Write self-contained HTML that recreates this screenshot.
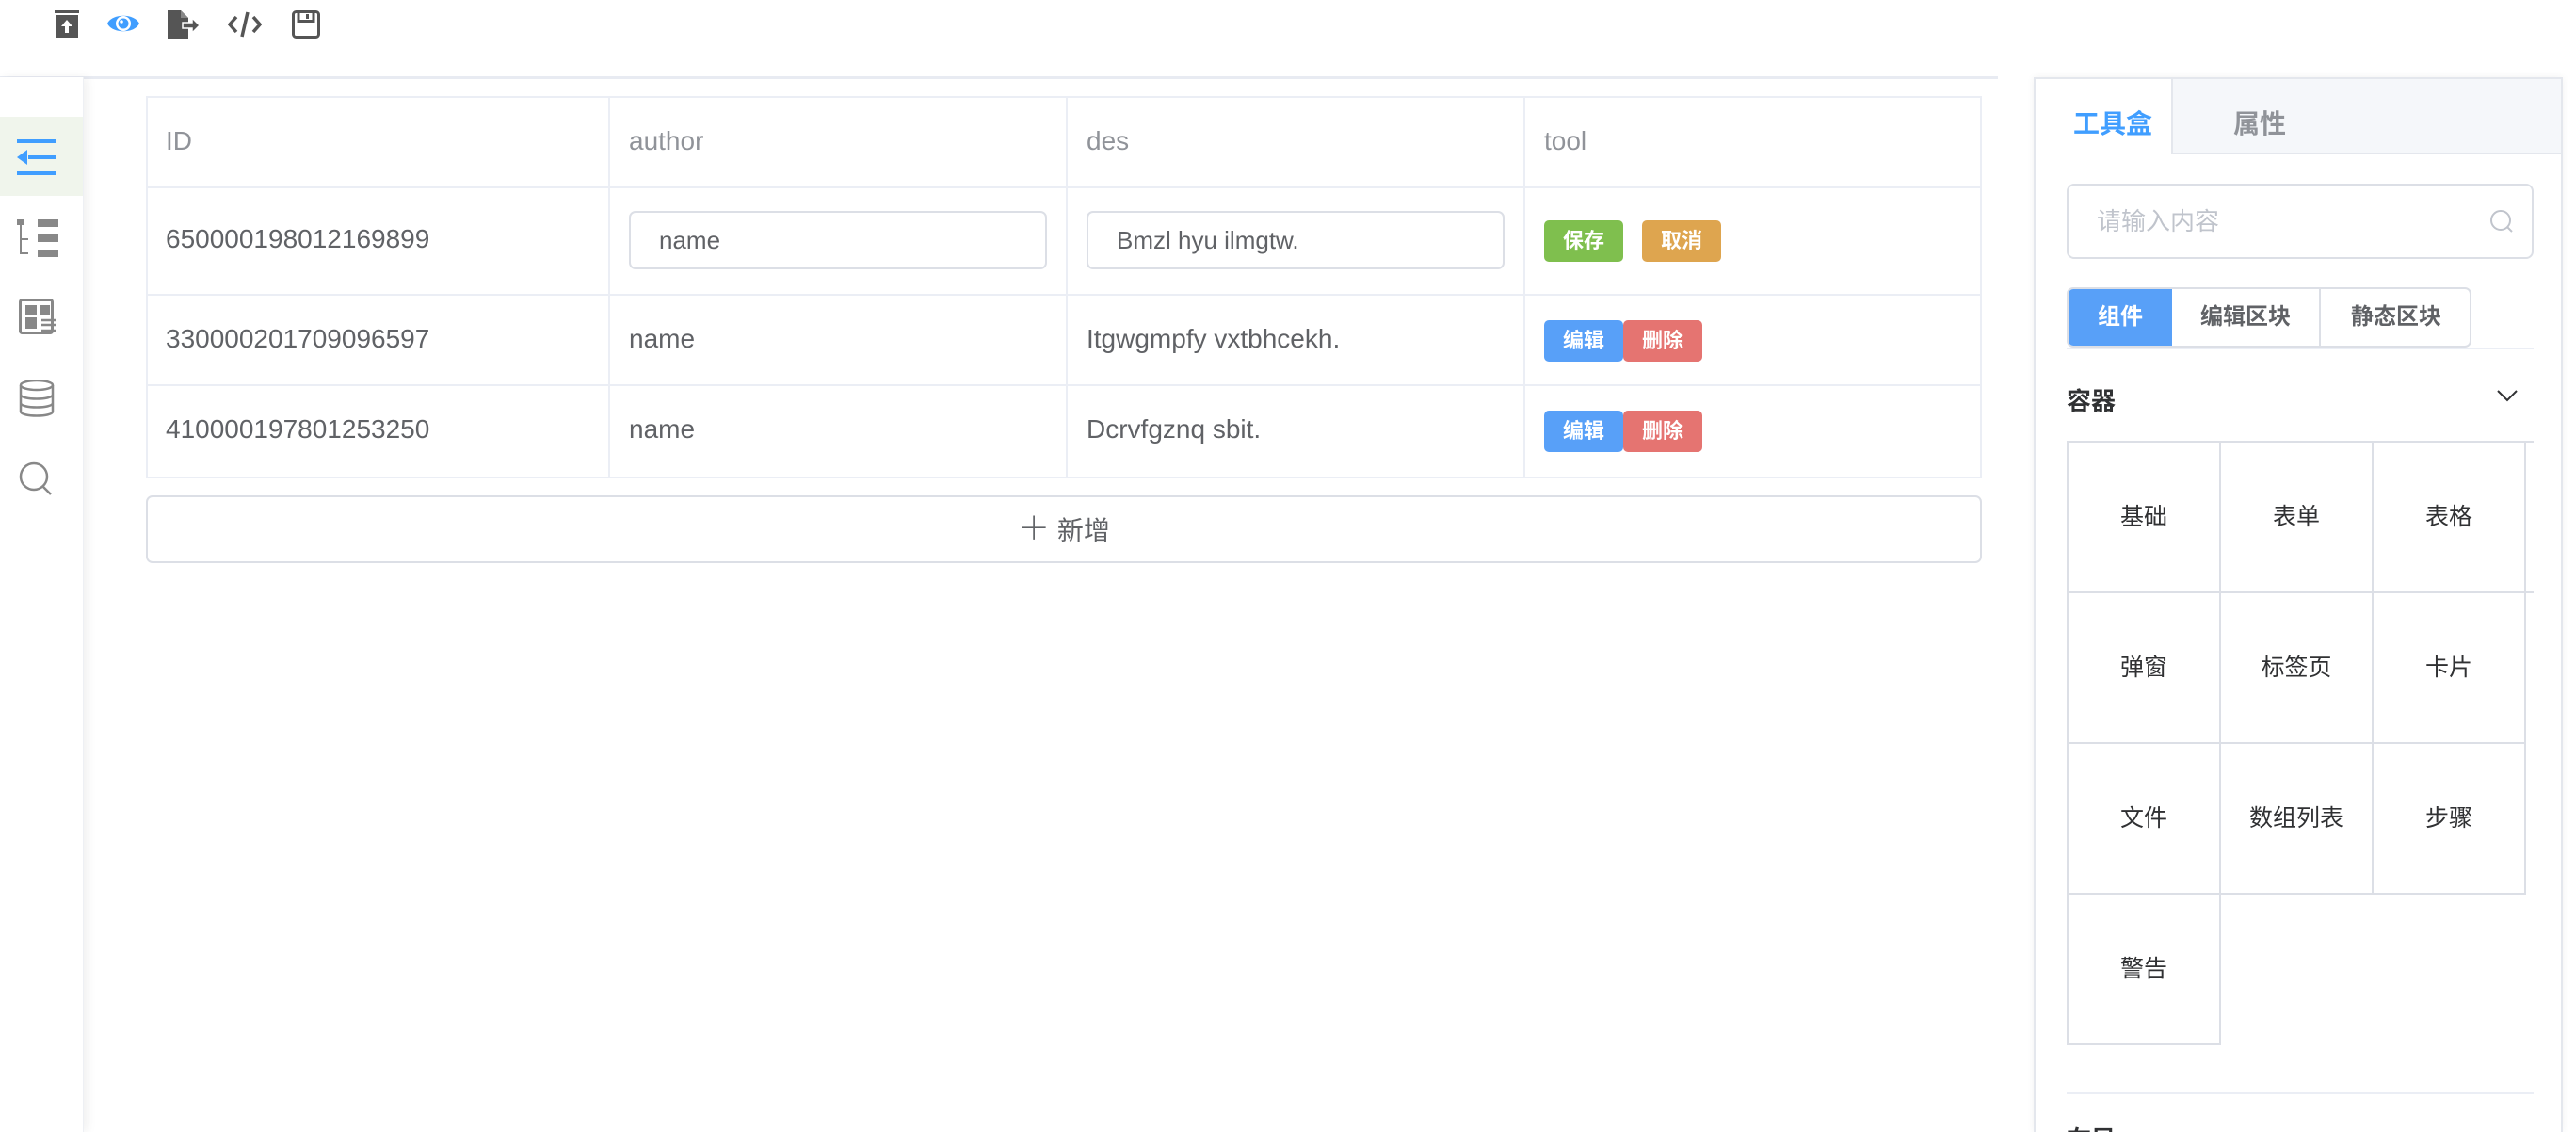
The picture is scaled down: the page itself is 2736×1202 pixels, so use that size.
<!DOCTYPE html>
<html style="width:2736px;height:1202px;overflow:hidden"><head><meta charset="utf-8"><style>
*{box-sizing:border-box;margin:0;padding:0}
body{width:2736px;height:1202px;overflow:hidden;background:#fff;font-family:"Liberation Sans","Noto Sans CJK SC",sans-serif;position:relative;color:#606266}
.a{position:absolute}
.tb svg{position:absolute;top:11px}
.side{left:0;top:82px;width:89px;height:1120px;background:#fff;box-shadow:4px 0 10px rgba(0,0,0,.06);border-right:1px solid #eef0f4}
.vl{position:absolute;width:2px;background:#ebeef5}
.hl{position:absolute;height:2px;background:#ebeef5}
.th{position:absolute;font-size:28px;color:#909399;line-height:28px;font-weight:500}
.td{position:absolute;font-size:28px;color:#606266;line-height:28px}
.inp{position:absolute;border:2px solid #dcdfe6;border-radius:7px;height:62px;font-size:26px;color:#606266;line-height:58px;padding-left:30px}
.btn{position:absolute;height:44px;width:84px;color:#fff;font-size:22px;font-weight:bold;text-align:center;line-height:44px;border-radius:5px}
.cell{position:absolute;width:164px;height:162px;border:2px solid #dcdfe6;font-size:25px;color:#303133;text-align:center;line-height:158px}
</style></head><body>
<div class="a tb" style="left:0;top:0;width:2736px;height:82px">
<svg style="left:58px" width="26" height="30" viewBox="0 0 26 30"><rect x="0" y="0" width="26" height="3" fill="#555"/><rect x="9" y="-1" width="8" height="3" fill="#555"/><path d="M1 5h24v24H1z" fill="#555"/><path d="M13 10l-6 7h4v7h4v-7h4z" fill="#fff"/></svg>
<svg style="left:113px;top:11px" width="36" height="28" viewBox="0 0 36 28"><path d="M1 14C6 3 30 3 35 14C30 25 6 25 1 14z" fill="#409eff"/><circle cx="18" cy="14" r="8" fill="#fff"/><circle cx="18" cy="14" r="5.5" fill="#409eff"/><circle cx="16" cy="12" r="1.8" fill="#fff"/></svg>
<svg style="left:178px" width="34" height="30" viewBox="0 0 34 30"><path d="M0 0h14l8 8v22H0z" fill="#555"/><path d="M14 0v8h8" fill="#888"/><path d="M16 13h10v-5l8 8-8 8v-5H16z" fill="#555" stroke="#fff" stroke-width="1.5"/></svg>
<svg style="left:242px;top:12px" width="36" height="28" viewBox="0 0 36 28"><path d="M9 6L2 14l7 8M27 6l7 8-7 8M21 1l-6 26" stroke="#555" stroke-width="3.5" fill="none"/></svg>
<svg style="left:310px" width="30" height="30" viewBox="0 0 30 30"><rect x="1.5" y="1.5" width="27" height="27" rx="3" fill="none" stroke="#555" stroke-width="3"/><rect x="7" y="1.5" width="16" height="10" fill="none" stroke="#555" stroke-width="3"/><rect x="15" y="4" width="3" height="5" fill="#555"/></svg>
</div>
<div class="hl" style="left:0;top:81px;width:2122px;height:3px;background:#e8ebf2"></div>
<div class="a side">
<div class="a" style="left:0;top:42px;width:88px;height:84px;background:#f0f5ec"></div>
<svg class="a" style="left:18px;top:66px" width="42" height="38" viewBox="0 0 42 38"><rect x="0" y="0" width="42" height="4" fill="#409eff"/><rect x="12" y="17" width="30" height="4" fill="#409eff"/><rect x="0" y="34" width="42" height="4" fill="#409eff"/><path d="M0 19l11-8v16z" fill="#409eff"/></svg>
<svg class="a" style="left:18px;top:151px" width="44" height="40" viewBox="0 0 44 40"><rect x="0" y="0" width="8" height="6" fill="#888"/><path d="M4 6v30h8M4 21h8" stroke="#888" stroke-width="2" fill="none"/><rect x="22" y="0" width="22" height="8" fill="#888"/><rect x="22" y="16" width="22" height="8" fill="#888"/><rect x="22" y="32" width="22" height="8" fill="#888"/></svg>
<svg class="a" style="left:20px;top:235px" width="40" height="38" viewBox="0 0 40 38"><rect x="1.5" y="1.5" width="34" height="35" rx="2" fill="none" stroke="#888" stroke-width="3"/><rect x="7" y="7" width="12" height="10" fill="#888"/><rect x="22" y="7" width="11" height="10" fill="#888"/><rect x="7" y="20" width="12" height="12" fill="#888"/><path d="M24 23h16M24 28h16M24 34h16" stroke="#888" stroke-width="2.5"/></svg>
<svg class="a" style="left:20px;top:321px" width="38" height="40" viewBox="0 0 38 40"><ellipse cx="19" cy="6" rx="17" ry="5" fill="none" stroke="#888" stroke-width="2.5"/><path d="M2 6v28c0 6 34 6 34 0V6M2 16c0 6 34 6 34 0M2 25c0 6 34 6 34 0" fill="none" stroke="#888" stroke-width="2.5"/></svg>
<svg class="a" style="left:20px;top:408px" width="38" height="38" viewBox="0 0 38 38"><circle cx="16" cy="16" r="14" fill="none" stroke="#888" stroke-width="2.5"/><path d="M26 27l8 8" stroke="#888" stroke-width="2.5"/></svg>
</div>
<div class="a" style="left:155px;top:102px;width:1950px;height:406px;border:2px solid #ebeef5"></div>
<div class="vl" style="left:646px;top:102px;height:406px"></div>
<div class="vl" style="left:1132px;top:102px;height:406px"></div>
<div class="vl" style="left:1618px;top:102px;height:406px"></div>
<div class="hl" style="left:155px;top:198px;width:1950px"></div>
<div class="hl" style="left:155px;top:312px;width:1950px"></div>
<div class="hl" style="left:155px;top:408px;width:1950px"></div>
<div class="th" style="left:176px;top:136px">ID</div>
<div class="th" style="left:668px;top:136px">author</div>
<div class="th" style="left:1154px;top:136px">des</div>
<div class="th" style="left:1640px;top:136px">tool</div>
<div class="td" style="left:176px;top:240px">650000198012169899</div>
<div class="inp" style="left:668px;top:224px;width:444px">name</div>
<div class="inp" style="left:1154px;top:224px;width:444px">Bmzl hyu ilmgtw.</div>
<div class="btn" style="left:1640px;top:234px;background:#7fbf4e">保存</div>
<div class="btn" style="left:1744px;top:234px;background:#dea54f">取消</div>
<div class="td" style="left:176px;top:346px">330000201709096597</div>
<div class="td" style="left:668px;top:346px">name</div>
<div class="td" style="left:1154px;top:346px">Itgwgmpfy vxtbhcekh.</div>
<div class="btn" style="left:1640px;top:340px;background:#58a0f8">编辑</div>
<div class="btn" style="left:1724px;top:340px;background:#e57471">删除</div>
<div class="td" style="left:176px;top:442px">410000197801253250</div>
<div class="td" style="left:668px;top:442px">name</div>
<div class="td" style="left:1154px;top:442px">Dcrvfgznq sbit.</div>
<div class="btn" style="left:1640px;top:436px;background:#58a0f8">编辑</div>
<div class="btn" style="left:1724px;top:436px;background:#e57471">删除</div>
<div class="a" style="left:155px;top:526px;width:1950px;height:72px;border:2px solid #dcdfe6;border-radius:7px;text-align:center;font-size:28px;line-height:68px;color:#606266"><span style="font-size:34px;font-weight:300">＋</span> 新增</div>
<div class="a" style="left:2160px;top:82px;width:562px;height:1120px;border:2px solid #e4e7ed;border-bottom:none;box-shadow:0 0 8px rgba(0,0,0,.06);background:#fff;overflow:hidden">
<div class="a" style="left:144px;top:0;width:420px;height:80px;background:#f5f7fa;border-left:2px solid #e4e7ed;border-bottom:2px solid #e4e7ed"></div>
<div class="a" style="left:40px;top:26px;font-size:28px;color:#409eff;font-weight:bold">工具盒</div>
<div class="a" style="left:210px;top:26px;font-size:28px;color:#909399;font-weight:bold">属性</div>
<div class="a" style="left:33px;top:111px;width:496px;height:80px;border:2px solid #dcdfe6;border-radius:8px;font-size:26px;color:#c0c4cc;line-height:76px;padding-left:30px">请输入内容</div>
<svg class="a" style="left:482px;top:138px" width="26" height="26" viewBox="0 0 26 26"><circle cx="12" cy="12" r="10" fill="none" stroke="#c0c4cc" stroke-width="2"/><path d="M19 19l5 5" stroke="#c0c4cc" stroke-width="2"/></svg>
<div class="a" style="left:33px;top:221px;width:430px;height:64px;border:2px solid #dcdfe6;border-radius:7px;overflow:hidden;font-size:24px;font-weight:bold;color:#606266;line-height:60px">
<div class="a" style="left:0;top:0;width:110px;height:62px;background:#58a0f8;color:#fff;text-align:center">组件</div>
<div class="a" style="left:110px;top:0;width:158px;text-align:center;border-right:2px solid #dcdfe6;height:62px">编辑区块</div>
<div class="a" style="left:268px;top:0;width:160px;text-align:center">静态区块</div>
</div>
<div class="hl" style="left:33px;top:285px;width:496px"></div>
<div class="a" style="left:33px;top:322px;font-size:26px;color:#303133;font-weight:bold">容器</div>
<svg class="a" style="left:490px;top:330px" width="22" height="14" viewBox="0 0 22 14"><path d="M1 1l10 10L21 1" fill="none" stroke="#303133" stroke-width="2"/></svg>
<div class="a" style="left:33px;top:384px;width:496px;height:650px;overflow:hidden">
<div class="cell" style="left:0;top:0">基础</div><div class="cell" style="left:162px;top:0">表单</div><div class="cell" style="left:324px;top:0">表格</div><div class="cell" style="left:486px;top:0"></div>
<div class="cell" style="left:0;top:160px">弹窗</div><div class="cell" style="left:162px;top:160px">标签页</div><div class="cell" style="left:324px;top:160px">卡片</div>
<div class="cell" style="left:0;top:320px">文件</div><div class="cell" style="left:162px;top:320px">数组列表</div><div class="cell" style="left:324px;top:320px">步骤</div>
<div class="cell" style="left:0;top:480px">警告</div>
</div>
<div class="hl" style="left:33px;top:1076px;width:496px"></div>
<div class="a" style="left:33px;top:1106px;font-size:26px;color:#303133;font-weight:bold">布局</div>
</div>
</body></html>
